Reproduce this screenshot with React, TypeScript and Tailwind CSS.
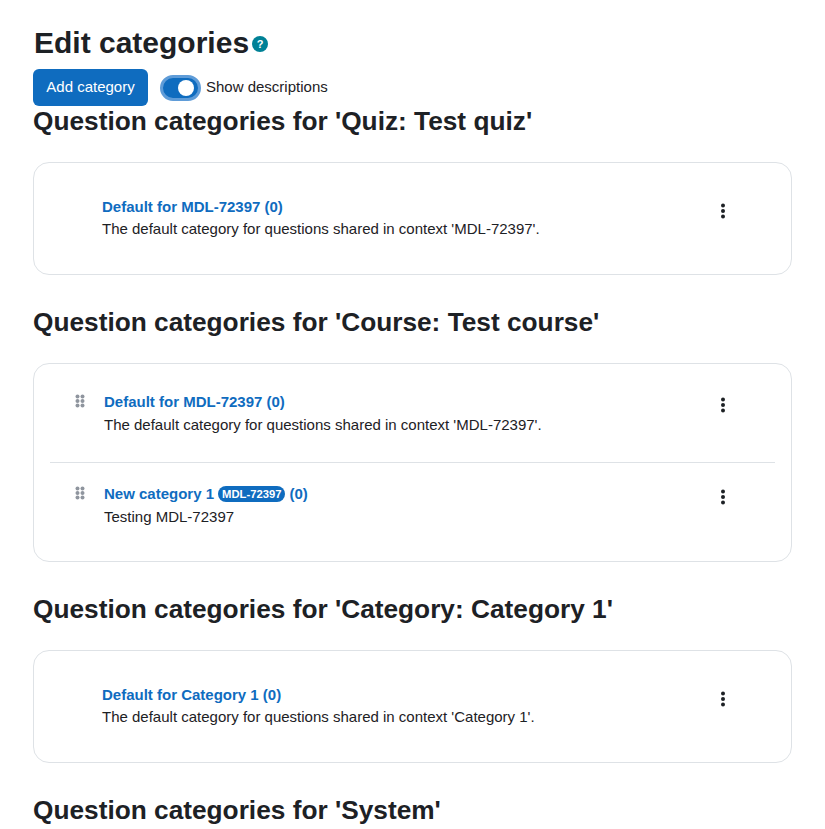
import React from 'react';

const Kebab = () => (
  <svg width="4" height="16" viewBox="0 0 4 16" className="block" fill="#1d2125">
    <circle cx="2" cy="2.5" r="2" />
    <circle cx="2" cy="8" r="2" />
    <circle cx="2" cy="13.5" r="2" />
  </svg>
);

const Grip = () => (
  <svg width="10" height="14" viewBox="0 0 10 14" className="block" fill="#8f959e">
    <circle cx="2.5" cy="2.5" r="2" />
    <circle cx="7.5" cy="2.5" r="2" />
    <circle cx="2.5" cy="7" r="2" />
    <circle cx="7.5" cy="7" r="2" />
    <circle cx="2.5" cy="11.5" r="2" />
    <circle cx="7.5" cy="11.5" r="2" />
  </svg>
);

const SectionTitle = ({ children }: { children: React.ReactNode }) => (
  <h3 className="text-[26.25px] leading-[31.5px] font-bold text-[#1d2125]">{children}</h3>
);

const SingleCard = ({ name, desc }: { name: string; desc: string }) => (
  <div className="mt-[24px] h-[113px] rounded-[16px] border border-[#dee2e6] flex pl-[68px] pr-[66px] pt-[33px]">
    <div className="flex-1">
      <a className="block text-[15px] leading-[22.5px] font-bold text-[#0f6cbf]">{name}</a>
      <p className="text-[15px] leading-[22.5px] text-[#1d2125]">{desc}</p>
    </div>
    <div className="pt-[7px]">
      <Kebab />
    </div>
  </div>
);

const App: React.FC = () => {
  return (
    <div className="h-[829px] overflow-hidden bg-white px-[33px] font-['Liberation_Sans',Arial,sans-serif]">
      <div className="pt-[25px] pl-[1px] flex items-center h-[60px]">
        <h2 className="text-[30px] leading-[36px] font-bold text-[#1d2125]">Edit categories</h2>
        <span className="ml-[3px] mt-[3px] w-[16px] h-[16px] rounded-full bg-[#008196] flex items-center justify-center text-white text-[11px] font-bold leading-none">
          ?
        </span>
      </div>

      <div className="flex items-center mt-[9px] h-[37px]">
        <button className="h-[37px] w-[115px] rounded-[6px] bg-[#0f6cbf] text-white text-[15px]">Add category</button>
        <span className="ml-[12px] w-[41px] h-[26px] rounded-full bg-[#0f6cbf] border-[3px] border-[#5f9cd8] flex items-center justify-end pr-[4px]">
          <span className="w-[16px] h-[16px] rounded-full bg-white" />
        </span>
        <span className="ml-[5px] text-[15px] text-[#1d2125]">Show descriptions</span>
      </div>

      <SectionTitle>Question categories for 'Quiz: Test quiz'</SectionTitle>
      <SingleCard name="Default for MDL-72397 (0)" desc="The default category for questions shared in context 'MDL-72397'." />

      <div className="mt-[32px]">
        <SectionTitle>Question categories for 'Course: Test course'</SectionTitle>
      </div>
      <div className="mt-[25px] rounded-[16px] border border-[#dee2e6] px-[16px] pt-[28px] h-[199px]">
        <div className="flex h-[71px] border-b border-[#dee2e6] pl-[25px] pr-[50px]">
          <div className="w-[29px] pt-[2px]">
            <Grip />
          </div>
          <div className="flex-1 -mt-[1px]">
            <a className="block text-[15px] leading-[22.5px] font-bold text-[#0f6cbf]">Default for MDL-72397 (0)</a>
            <p className="text-[15px] leading-[22.5px] text-[#1d2125]">The default category for questions shared in context 'MDL-72397'.</p>
          </div>
          <div className="pt-[5px]">
            <Kebab />
          </div>
        </div>
        <div className="flex pt-[21px] pl-[25px] pr-[50px]">
          <div className="w-[29px] pt-[2px]">
            <Grip />
          </div>
          <div className="flex-1 -mt-[1px]">
            <a className="flex items-center text-[15px] leading-[22.5px] font-bold text-[#0f6cbf]">
              New category 1
              <span className="mx-[4px] h-[16px] px-[4px] rounded-full bg-[#0f6cbf] text-white text-[11.25px] leading-[16px]">MDL-72397</span>
              (0)
            </a>
            <p className="text-[15px] leading-[22.5px] text-[#1d2125]">Testing MDL-72397</p>
          </div>
          <div className="pt-[5px]">
            <Kebab />
          </div>
        </div>
      </div>

      <div className="mt-[32px]">
        <SectionTitle>Question categories for 'Category: Category 1'</SectionTitle>
      </div>
      <SingleCard name="Default for Category 1 (0)" desc="The default category for questions shared in context 'Category 1'." />

      <div className="mt-[32px]">
        <SectionTitle>Question categories for 'System'</SectionTitle>
      </div>
    </div>
  );
};

export default App;
